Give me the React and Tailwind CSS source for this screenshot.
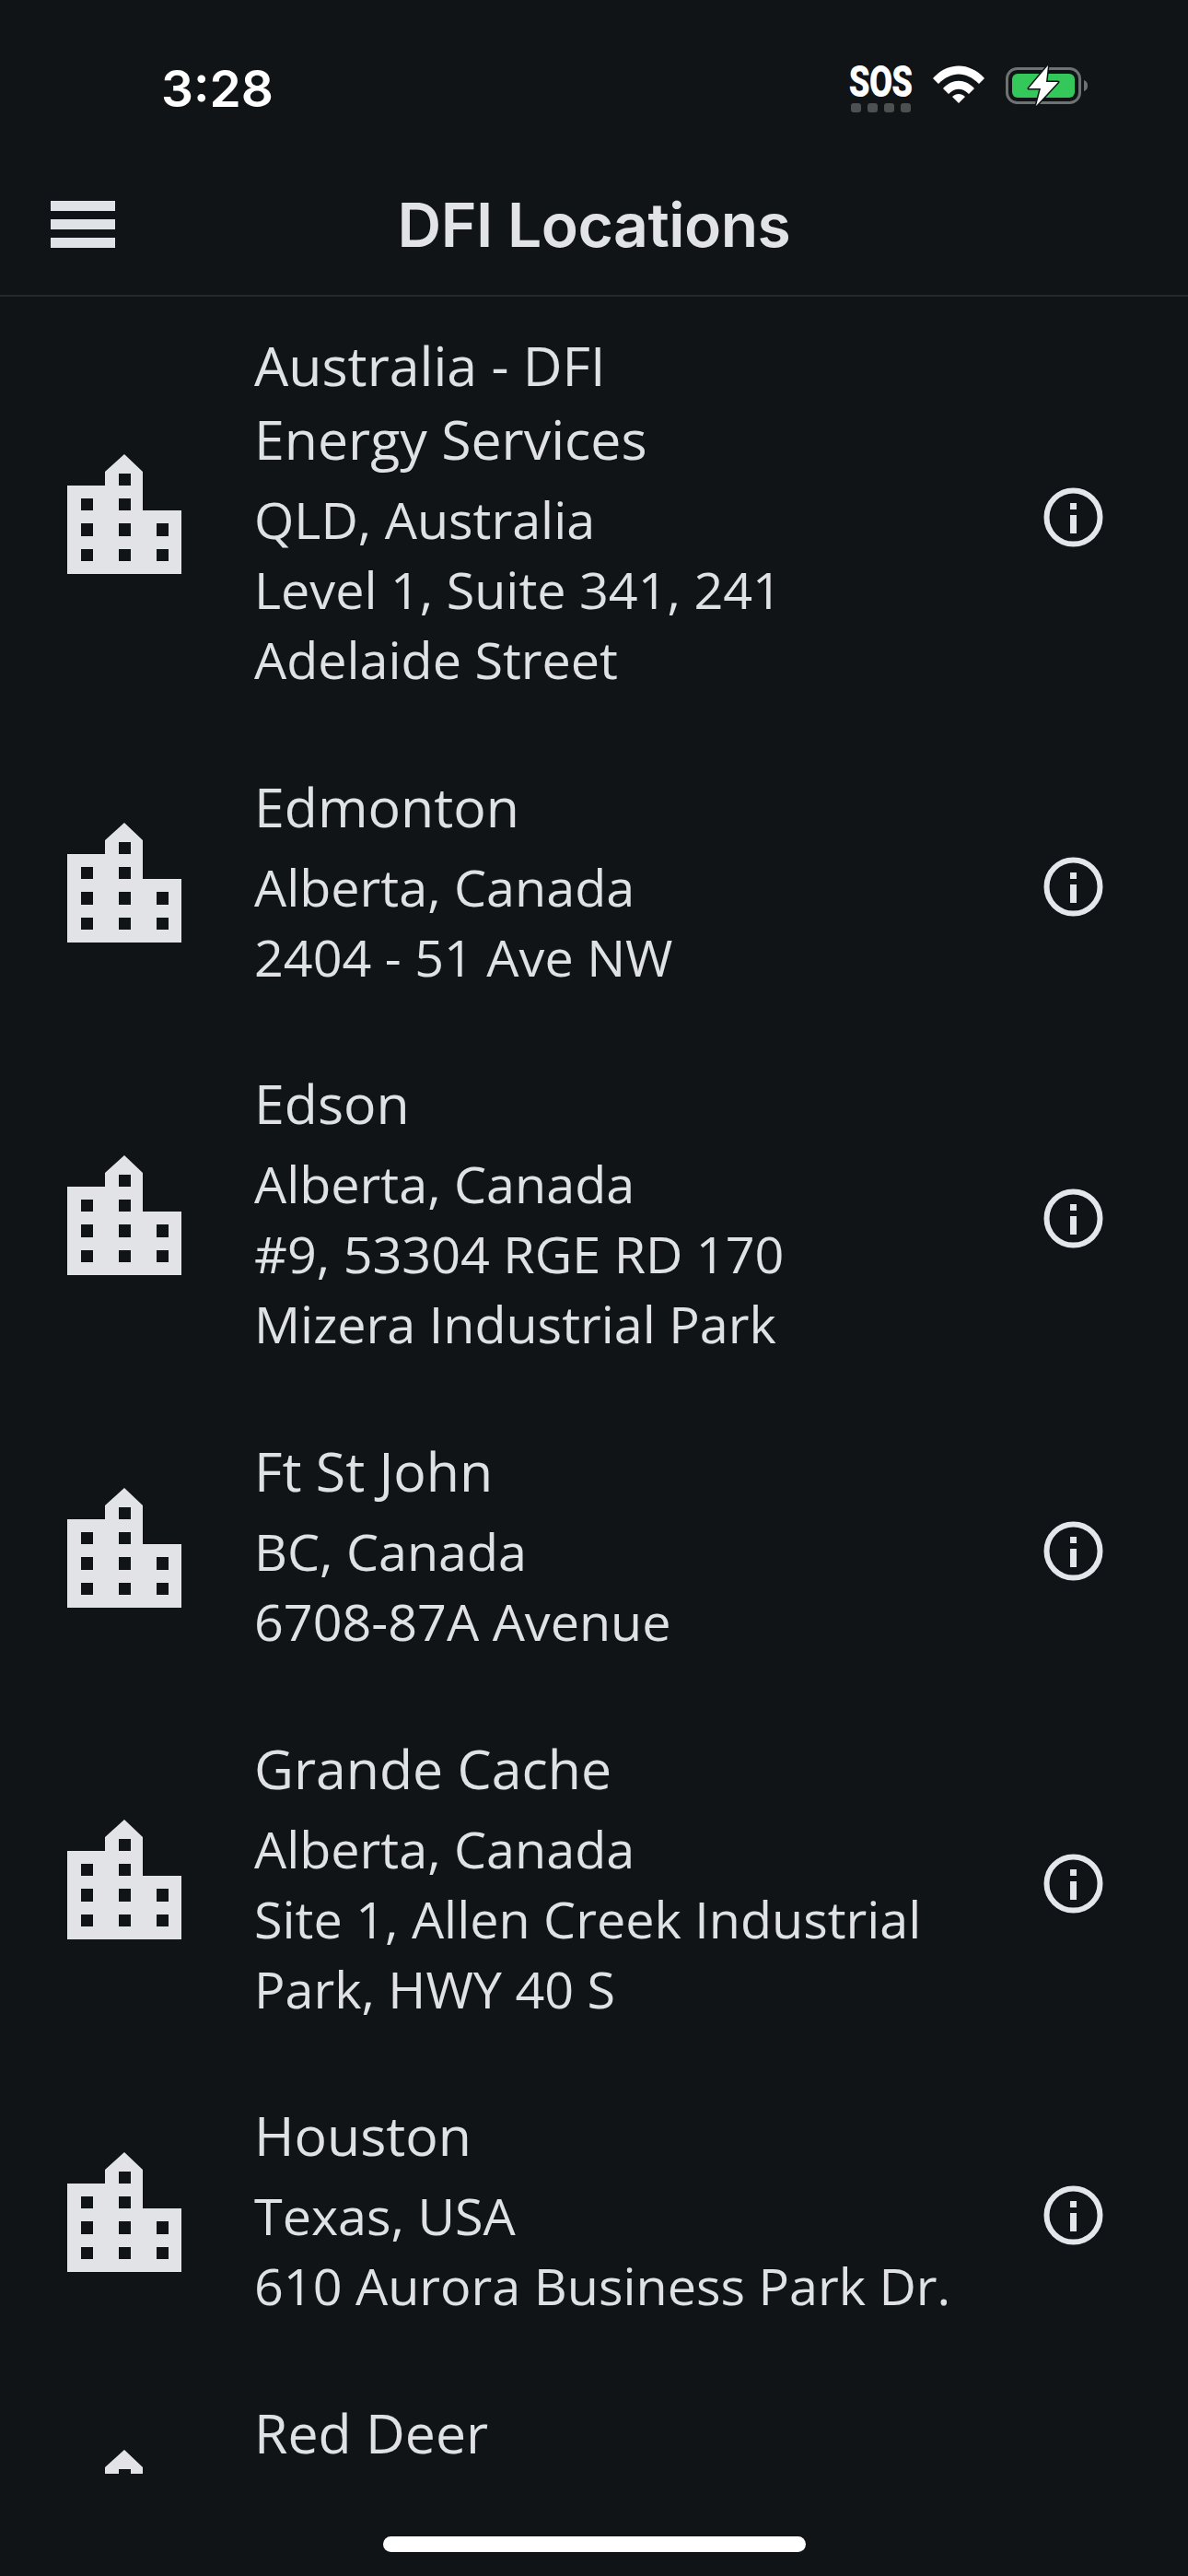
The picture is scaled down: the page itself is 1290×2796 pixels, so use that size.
import React from 'react';

const locations = [
  { name: ['Australia - DFI', 'Energy Services'], lines: ['QLD, Australia', 'Level 1, Suite 341, 241', 'Adelaide Street'] },
  { name: ['Edmonton'], lines: ['Alberta, Canada', '2404 - 51 Ave NW'] },
  { name: ['Edson'], lines: ['Alberta, Canada', '#9, 53304 RGE RD 170', 'Mizera Industrial Park'] },
  { name: ['Ft St John'], lines: ['BC, Canada', '6708-87A Avenue'] },
  { name: ['Grande Cache'], lines: ['Alberta, Canada', 'Site 1, Allen Creek Industrial', 'Park, HWY 40 S'] },
  { name: ['Houston'], lines: ['Texas, USA', '610 Aurora Business Park Dr.'] },
  { name: ['Red Deer'], lines: [], hiddenAddress: true },
];

const BuildingIcon = () => (
  <svg viewBox="0 0 124 130" className="w-[124px] h-[130px] shrink-0 mt-[6px]" fill="#e1e3e6">
    <path
      fillRule="evenodd"
      d="M62 0 L82 19 V61 H124 V130 H0 V34 H41 V19 Z
         M56 21 V34 H69 V21 Z
         M15 48 V61 H28 V48 Z M56 48 V61 H69 V48 Z
         M15 75 V89 H28 V75 Z M56 75 V89 H69 V75 Z M97 75 V89 H110 V75 Z
         M15 103 V116 H28 V103 Z M56 103 V116 H69 V103 Z M97 103 V116 H110 V103 Z"
    />
  </svg>
);

const InfoIcon = () => (
  <svg viewBox="0 0 65 65" className="w-[65px] h-[65px] shrink-0 mt-[14px]" fill="none">
    <circle cx="32.5" cy="32.5" r="29" stroke="#e3e6ea" strokeWidth="6" />
    <rect x="29" y="17" width="7" height="7" fill="#e3e6ea" />
    <rect x="29" y="30" width="7" height="20" fill="#e3e6ea" />
  </svg>
);

const WifiIcon = () => (
  <svg viewBox="0 0 56 42" className="w-[56px] h-[42px]" fill="#fff">
    <path d="M0 14 C16 -4 40 -4 56 14 L50 20 C36 6 20 6 6 20 Z" />
    <path d="M11 25 C21 14 35 14 45 25 L39 31 C32 24 24 24 17 31 Z" />
    <path d="M21 34 C25 30 31 30 35 34 L28 41 Z" />
  </svg>
);

const BatteryIcon = () => (
  <svg viewBox="0 0 90 44" className="w-[90px] h-[44px]" fill="none">
    <rect x="1.5" y="3.5" width="79" height="37" rx="11" stroke="#6f7273" strokeWidth="3" />
    <rect x="7" y="9" width="68" height="26" rx="6" fill="#34c759" />
    <path d="M85 16 C88 17 89 19 89 22 C89 25 88 27 85 28 Z" fill="#6f7273" />
    <path
      d="M46 0 L25 25 H38 L33 44 L57 18 H44 Z"
      fill="#fff"
      stroke="#101416"
      strokeWidth="3"
      strokeLinejoin="round"
      paintOrder="stroke"
    />
  </svg>
);

const App = () => {
  return (
    <div className="w-[1290px] h-[2796px] bg-[#101416] flex flex-col overflow-hidden font-['Open_Sans',sans-serif]">
      {/* Status bar */}
      <div className="h-[160px] shrink-0 flex items-start justify-between pl-[175px] pr-[108px] pt-[62px]">
        <span className="font-['Inter',sans-serif] font-semibold text-[55px] leading-[68px] text-white">3:28</span>
        <div className="flex items-start gap-[23px] pt-[9px]">
          <div className="flex flex-col items-center w-[67px]">
            <span className="font-['Roboto',sans-serif] font-black text-[48px] leading-[36px] text-white scale-x-[.76] tracking-[-1px]">SOS</span>
            <div className="flex gap-[7px] mt-[5px]">
              <span className="w-[11px] h-[10px] rounded-[3px] bg-[#4d4f50]" />
              <span className="w-[11px] h-[10px] rounded-[3px] bg-[#4d4f50]" />
              <span className="w-[11px] h-[10px] rounded-[3px] bg-[#4d4f50]" />
              <span className="w-[11px] h-[10px] rounded-[3px] bg-[#4d4f50]" />
            </div>
          </div>
          <WifiIcon />
          <BatteryIcon />
        </div>
      </div>

      {/* Nav header */}
      <div className="h-[162px] shrink-0 relative flex items-center justify-center border-b-2 border-[#25292b]">
        <button className="absolute left-[55px] top-[58px] flex flex-col gap-[9px]">
          <span className="block w-[70px] h-[11px] bg-[#dfe3e8]" />
          <span className="block w-[70px] h-[11px] bg-[#dfe3e8]" />
          <span className="block w-[70px] h-[11px] bg-[#dfe3e8]" />
        </button>
        <h1 className="font-['Inter',sans-serif] font-semibold text-[66px] leading-[80px] tracking-[-0.5px] text-[#e2e3e6] pt-[8px]">DFI Locations</h1>
      </div>

      {/* List */}
      <div className="flex-1 overflow-hidden">
        {locations.map((loc, i) => (
          <div key={i} className="flex items-center pt-[34px] pb-[47.7px] pl-[73px] pr-[92px]">
            <BuildingIcon />
            <div className="flex-1 pl-[79px] text-[#dfe1e4]">
              {loc.name.map((n) => (
                <div key={n} className="text-[59px] leading-[80px]">{n}</div>
              ))}
              {loc.hiddenAddress && <div className="h-[161px]" />}
              {loc.lines.length > 0 && (
                <div className="mt-[9px]">
                  {loc.lines.map((l) => (
                    <div key={l} className="text-[55.7px] leading-[76px]">{l}</div>
                  ))}
                </div>
              )}
            </div>
            <InfoIcon />
          </div>
        ))}
      </div>

      {/* Home indicator */}
      <div className="h-[111px] shrink-0 flex justify-center pt-[68px]">
        <div className="w-[459px] h-[17px] rounded-full bg-white" />
      </div>
    </div>
  );
};

export default App;
